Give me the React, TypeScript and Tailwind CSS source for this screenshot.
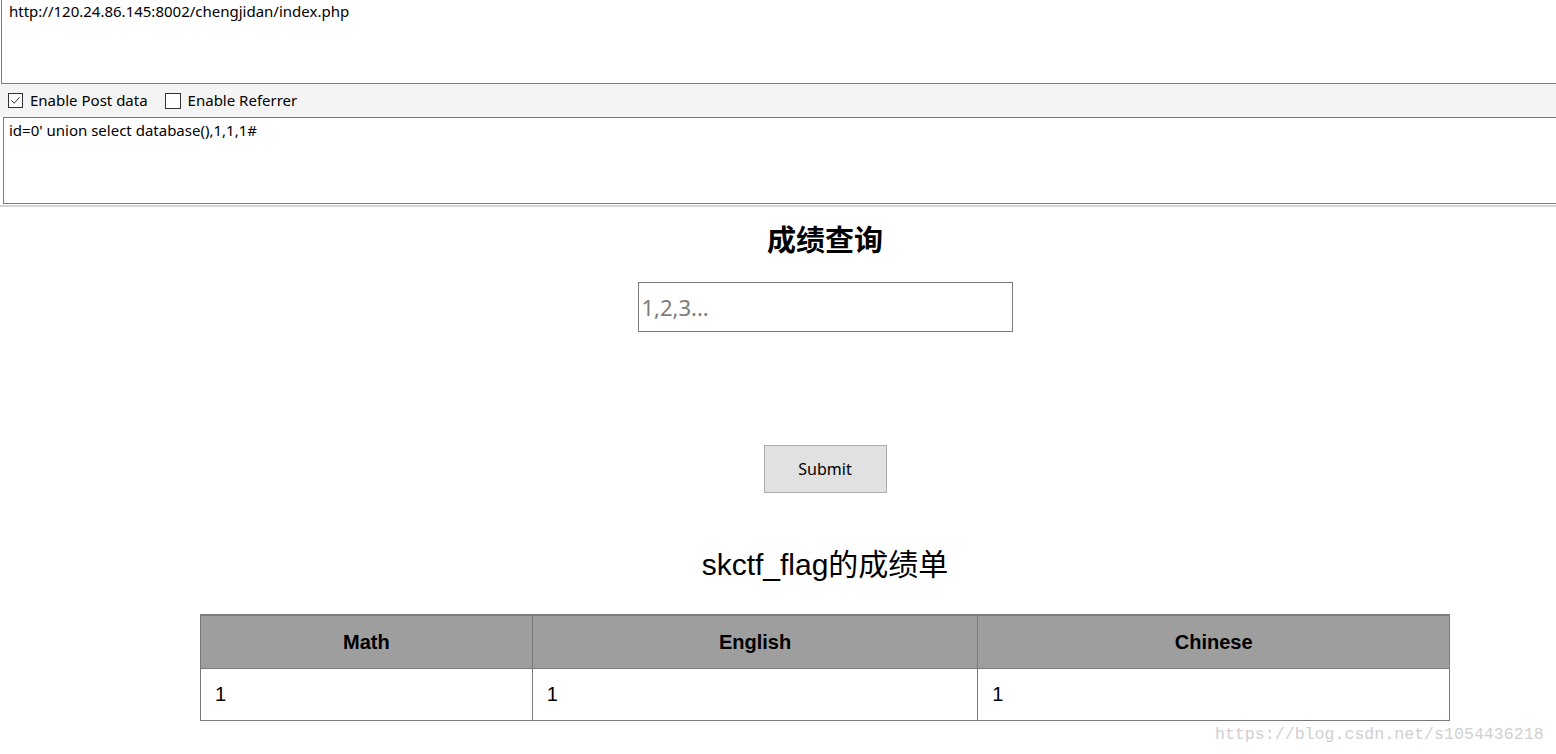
export default function App() {
  return (
    <div className="w-[1556px] h-[754px] bg-white overflow-hidden relative" style={{ fontFamily: '"Liberation Sans", "Noto Sans CJK SC", sans-serif' }}>
      {/* hackbar panel */}
      <div className="font-['Noto_Sans',sans-serif]">
        <div className="h-[84px] border-l border-b border-[#7a7a7a] ml-px pl-[7px] pt-[1px] text-[15px] text-black leading-[20px]">
          http://120.24.86.145:8002/chengjidan/index.php
        </div>
        <div className="h-[33px] bg-[#f4f4f4] flex items-center pl-[8px] text-[15px] text-black">
          <div className="flex items-center gap-[7px]">
            <span className="w-[15px] h-[15px] border border-[#333] bg-white flex items-center justify-center">
              <svg width="11" height="11" viewBox="0 0 11 11">
                <path d="M1.5 5.5 L4.3 8.3 L9.5 2.2" fill="none" stroke="#333" strokeWidth="1" />
              </svg>
            </span>
            <span>Enable Post data</span>
          </div>
          <div className="flex items-center gap-[7px] ml-[17px]">
            <span className="w-[16px] h-[16px] border border-[#333] bg-white" />
            <span>Enable Referrer</span>
          </div>
        </div>
        <div className="h-[87px] ml-[3px] border border-r-0 border-[#7a7a7a] pl-[5px] pt-[2px] text-[15px] text-black leading-[20px]">
          id=0' union select database(),1,1,1#
        </div>
        <div className="h-[3px] border-b-2 border-[#d4d4d4]" />
      </div>

      {/* page */}
      <div className="w-[1650px] flex flex-col items-center">
        <h2 className="mt-[14px] text-[29px] font-bold leading-[40px] text-black">成绩查询</h2>
        <input
          placeholder="1,2,3..."
          className="mt-[21px] w-[375px] h-[50px] border border-[#7a7a7a] px-[3px] text-[22px] font-['Noto_Sans',sans-serif] placeholder:text-[#7c7c7c] outline-none"
        />
        <button className="mt-[113px] w-[123px] h-[48px] bg-[#e1e1e1] border border-[#adadad] text-[16px] text-black font-['Noto_Sans',sans-serif]">
          Submit
        </button>
        <div className="mt-[52px] text-[30px] leading-[40px] text-black">skctf_flag的成绩单</div>
        <table className="mt-[29px] w-[1250px] border-collapse text-[20px] text-black">
          <thead>
            <tr className="bg-[#9e9e9e] h-[53px]">
              <th className="w-[332px] border border-[#7a7a7a] border-t-2 font-bold">Math</th>
              <th className="w-[446px] border border-[#7a7a7a] border-t-2 font-bold">English</th>
              <th className="w-[472px] border border-[#7a7a7a] border-t-2 font-bold">Chinese</th>
            </tr>
          </thead>
          <tbody>
            <tr className="h-[52px]">
              <td className="border border-[#7a7a7a] pl-[14px]">1</td>
              <td className="border border-[#7a7a7a] pl-[14px]">1</td>
              <td className="border border-[#7a7a7a] pl-[14px]">1</td>
            </tr>
          </tbody>
        </table>
      </div>

      <div className="absolute left-[1215px] top-[723px] text-[16.6px] text-[#d0d0d0] font-['Liberation_Mono',monospace]">
        https://blog.csdn.net/s1054436218
      </div>
    </div>
  );
}
